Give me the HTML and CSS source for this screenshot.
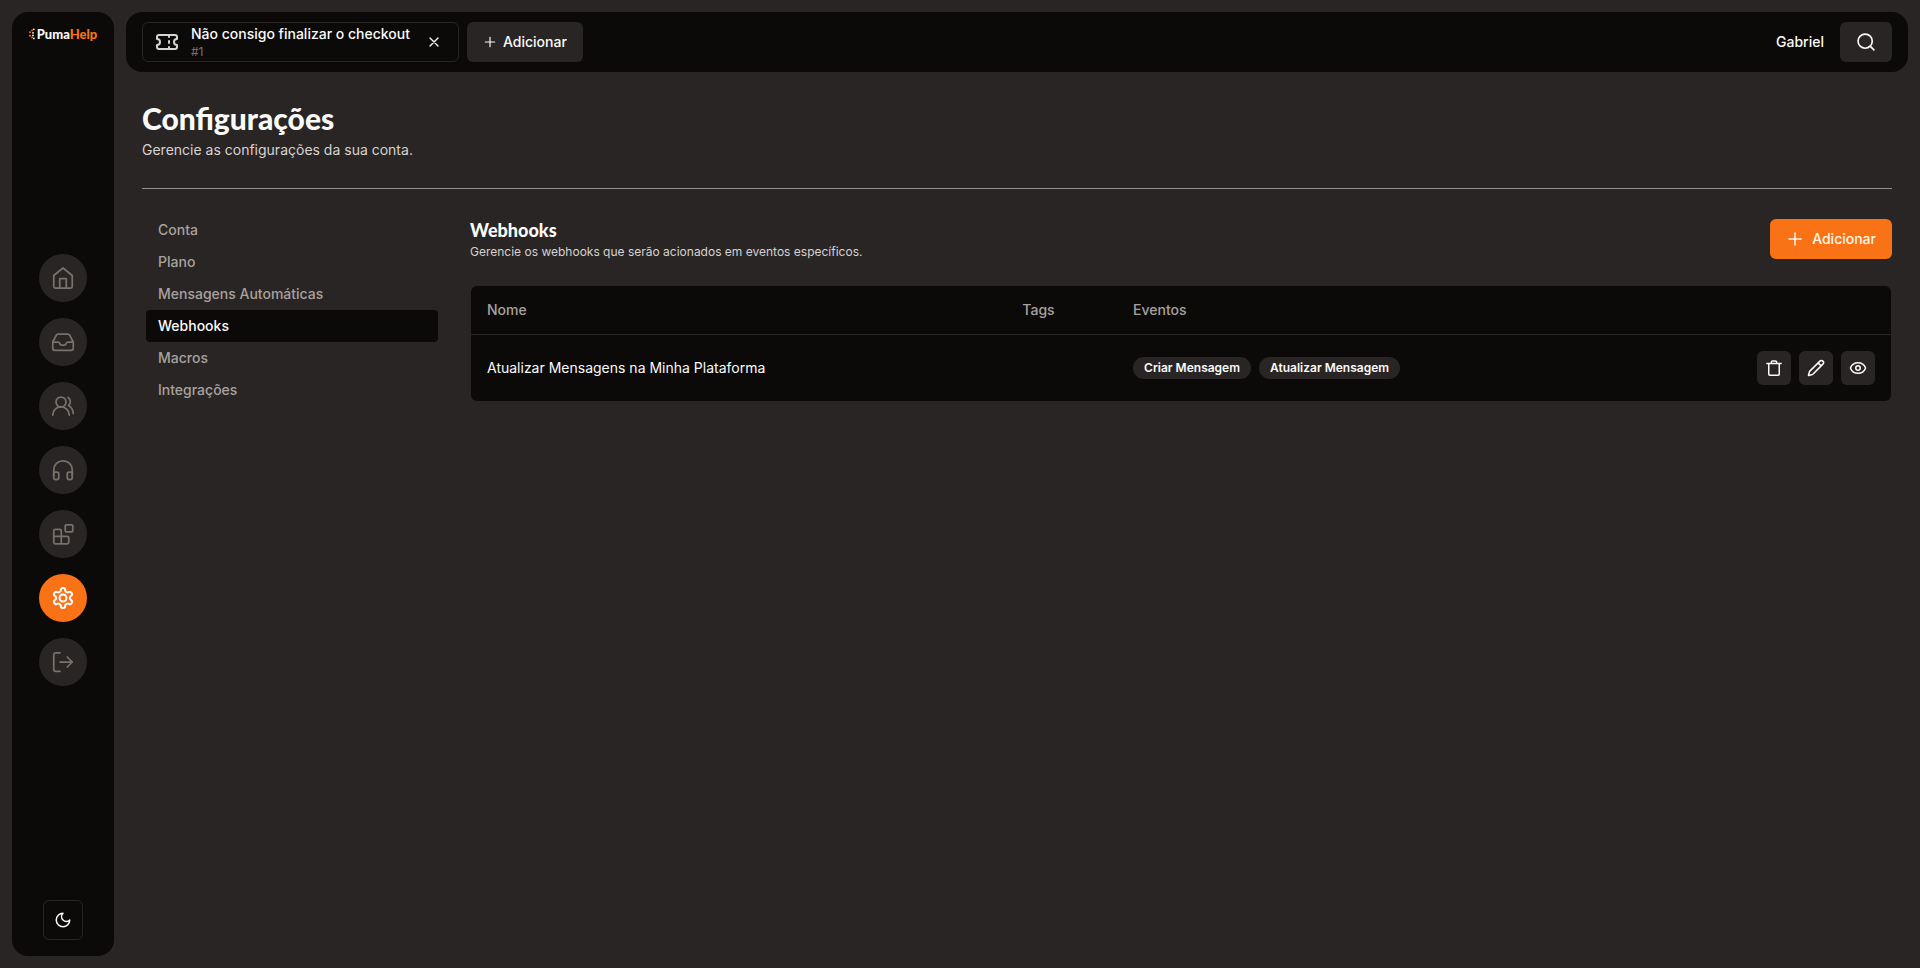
FILE: index.html
```html
<!DOCTYPE html>
<html lang="pt-BR">
<head>
<meta charset="utf-8">
<meta name="viewport" content="width=device-width, initial-scale=1">
<title>PumaHelp - Configurações</title>
<link rel="stylesheet" href="styles.css">
</head>
<body>
<div class="app">
  <aside class="sidebar">
    <a class="logo" href="#">
      <svg class="logo-mark" viewBox="0 0 6 12" aria-hidden="true"><g fill="#f97316"><circle cx="1" cy="4.2" r="1"/><circle cx="1" cy="7.8" r="1"/><circle cx="3" cy="2.4" r=".9"/><circle cx="3" cy="9.4" r=".9"/></g><g fill="#fff"><circle cx="4.8" cy="1.3" r=".9"/><circle cx="4" cy="4.8" r=".9"/><circle cx="4" cy="7.4" r=".9"/><circle cx="4.8" cy="10.4" r=".9"/></g></svg>
      <span>Puma<span class="logo-accent">Help</span></span>
    </a>
    <nav class="rail" aria-label="Principal">
      <a class="rail-link" href="#" aria-label="Início"><svg class="icon icon-lg" viewBox="0 0 24 24"><path d="M2.750 9.500 12 2l9.250 7.500V20.500a1.500 1.500 0 0 1-1.500 1.500H4.250a1.500 1.500 0 0 1-1.500-1.500Z"/><path d="M8.750 22v-9.500h6.500V22"/></svg></a>
      <a class="rail-link" href="#" aria-label="Caixa de entrada"><svg class="icon icon-lg" viewBox="0 0 24 24"><path d="M1.750 12h5.500c1 0 1.200.6 1.500 1.400.3 1 .9 1.600 1.900 1.600h2.700c1 0 1.600-.6 1.900-1.600.3-.8.500-1.400 1.500-1.400h5.500"/><path d="M1.750 12v6.250a2 2 0 0 0 2 2h16.500a2 2 0 0 0 2-2V12l-3.600-6.800a2 2 0 0 0-1.800-1.100H7.150a2 2 0 0 0-1.800 1.100Z"/></svg></a>
      <a class="rail-link" href="#" aria-label="Clientes"><svg class="icon icon-lg" viewBox="0 0 24 24"><circle cx="10" cy="8" r="5"/><path d="M1.750 21a8.250 8.250 0 0 1 16.500 0"/><path d="M17 3.500c2.800 1.600 3.100 5.800.5 8 2.900 1.500 4.500 4.300 4.750 8"/></svg></a>
      <a class="rail-link" href="#" aria-label="Atendimento"><svg class="icon icon-lg" viewBox="0 0 24 24"><path d="M2.750 17.500V12a9.250 9.250 0 0 1 18.500 0v5.500"/><path d="M2.750 14h3a2 2 0 0 1 2 2v3.500a2 2 0 0 1-2 2h-1a2 2 0 0 1-2-2ZM21.250 14h-3a2 2 0 0 0-2 2v3.500a2 2 0 0 0 2 2h1a2 2 0 0 0 2-2Z"/></svg></a>
      <a class="rail-link" href="#" aria-label="Aplicativos"><svg class="icon icon-lg" viewBox="0 0 24 24"><rect x="14.250" y="2.750" width="7.500" height="7" rx="1"/><path d="M10.250 21.750v-13a1.500 1.500 0 0 0-1.500-1.500h-4.500a1.500 1.500 0 0 0-1.500 1.500v11.500a1.500 1.500 0 0 0 1.500 1.500h12a1.500 1.500 0 0 0 1.500-1.500v-4.500a1.500 1.500 0 0 0-1.500-1.500H2.750"/></svg></a>
      <a class="rail-link rail-link-active" href="#" aria-label="Configurações" aria-current="page"><svg class="icon icon-lg" viewBox="0 0 24 24"><path d="M12.220 2h-.44a2 2 0 0 0-2 2v.18a2 2 0 0 1-1 1.730l-.43.250a2 2 0 0 1-2 0l-.15-.08a2 2 0 0 0-2.730.73l-.22.38a2 2 0 0 0 .73 2.730l.15.100a2 2 0 0 1 1 1.720v.51a2 2 0 0 1-1 1.740l-.15.090a2 2 0 0 0-.73 2.730l.22.380a2 2 0 0 0 2.730.73l.15-.08a2 2 0 0 1 2 0l.43.250a2 2 0 0 1 1 1.730V20a2 2 0 0 0 2 2h.44a2 2 0 0 0 2-2v-.18a2 2 0 0 1 1-1.730l.43-.25a2 2 0 0 1 2 0l.15.080a2 2 0 0 0 2.730-.73l.22-.39a2 2 0 0 0-.73-2.730l-.15-.08a2 2 0 0 1-1-1.740v-.5a2 2 0 0 1 1-1.740l.15-.09a2 2 0 0 0 .73-2.730l-.22-.38a2 2 0 0 0-2.730-.73l-.15.080a2 2 0 0 1-2 0l-.43-.25a2 2 0 0 1-1-1.730V4a2 2 0 0 0-2-2z"/><circle cx="12" cy="12" r="3.500"/></svg></a>
      <a class="rail-link" href="#" aria-label="Sair"><svg class="icon icon-lg" viewBox="0 0 24 24"><path d="M9 2.750H4.750a2 2 0 0 0-2 2v14.500a2 2 0 0 0 2 2H9M9 12h12.250M16.250 7l5 5-5 5"/></svg></a>
    </nav>
    <button class="theme-button" type="button" aria-label="Alternar tema"><svg class="icon icon-md" viewBox="0 0 24 24"><path d="M12 3a6 6 0 0 0 9 9 9 9 0 1 1-9-9Z"/></svg></button>
  </aside>

  <div class="content">
    <header class="topbar">
      <div class="tab">
        <svg class="icon icon-lg tab-icon" viewBox="0 0 24 24"><path d="M2 9a3 3 0 0 1 0 6v2a2 2 0 0 0 2 2h16a2 2 0 0 0 2-2v-2a3 3 0 0 1 0-6V7a2 2 0 0 0-2-2H4a2 2 0 0 0-2 2Z"/><path d="M14 5v2M14 11v2M14 17v2"/></svg>
        <div class="tab-text"><span class="tab-title">Não consigo finalizar o checkout</span><span class="tab-id">#1</span></div>
        <button class="tab-close" type="button" aria-label="Fechar"><svg class="icon icon-sm" viewBox="0 0 24 24"><path d="M18 6 6 18M6 6l12 12"/></svg></button>
      </div>
      <button class="button button-dark" type="button"><svg class="icon icon-xs" viewBox="0 0 24 24"><path d="M4 12h16M12 4v16"/></svg>Adicionar</button>
      <span class="user">Gabriel</span>
      <button class="button button-search" type="button" aria-label="Buscar"><svg class="icon icon-md" viewBox="0 0 24 24"><circle cx="11" cy="11" r="8.500"/><path d="m21.500 21.500-4.500-4.500"/></svg></button>
    </header>

    <main class="page">
      <div class="page-head">
        <h1 class="page-title">Configurações</h1>
        <p class="page-subtitle">Gerencie as configurações da sua conta.</p>
      </div>
      <div class="settings">
        <nav class="menu" aria-label="Configurações">
          <a class="menu-link" href="#">Conta</a>
          <a class="menu-link" href="#">Plano</a>
          <a class="menu-link" href="#">Mensagens Automáticas</a>
          <a class="menu-link menu-link-active" href="#" aria-current="page">Webhooks</a>
          <a class="menu-link" href="#">Macros</a>
          <a class="menu-link" href="#">Integrações</a>
        </nav>
        <section class="panel">
          <div class="panel-head">
            <div>
              <h2 class="panel-title">Webhooks</h2>
              <p class="panel-subtitle">Gerencie os webhooks que serão acionados em eventos específicos.</p>
            </div>
            <button class="button button-primary" type="button"><svg class="icon icon-plus" viewBox="0 0 24 24"><path d="M4 12h16M12 4v16"/></svg>Adicionar</button>
          </div>
          <table class="table">
            <thead>
              <tr><th class="col-name" scope="col">Nome</th><th class="col-tags" scope="col">Tags</th><th scope="col">Eventos</th><td></td></tr>
            </thead>
            <tbody>
              <tr>
                <td>Atualizar Mensagens na Minha Plataforma</td>
                <td></td>
                <td><div class="badges"><span class="badge">Criar Mensagem</span><span class="badge">Atualizar Mensagem</span></div></td>
                <td><div class="actions">
                  <button class="action" type="button" aria-label="Excluir"><svg class="icon icon-md" viewBox="0 0 24 24"><path d="M2.500 6h19M5 6v14a1.500 1.500 0 0 0 1.500 1.500h11A1.500 1.500 0 0 0 19 20V6M8.500 6V4A1.500 1.500 0 0 1 10 2.500h4A1.500 1.500 0 0 1 15.500 4v2"/></svg></button>
                  <button class="action" type="button" aria-label="Editar"><svg class="icon icon-md" viewBox="0 0 24 24"><path d="M21.200 6.800a2.800 2.800 0 0 0-4-4L3.800 16.200a2 2 0 0 0-.5.800L2 21.400a.5.500 0 0 0 .6.600L7 20.700a2 2 0 0 0 .8-.5ZM14.800 5.200l4 4"/></svg></button>
                  <button class="action" type="button" aria-label="Visualizar"><svg class="icon icon-md" viewBox="0 0 24 24"><path d="M2 12.300a1 1 0 0 1 0-.6 10.800 10.800 0 0 1 20 0 1 1 0 0 1 0 .6 10.800 10.800 0 0 1-20 0"/><circle cx="12" cy="12" r="3"/></svg></button>
                </div></td>
              </tr>
            </tbody>
          </table>
        </section>
      </div>
    </main>
  </div>
</div>
</body>
</html>
```
FILE: styles.css
```css
* { box-sizing: border-box; }

body {
  margin: 0;
  background: #292524;
  color: #fafaf9;
  font-family: Inter, "Liberation Sans", sans-serif;
  font-size: 14px;
  line-height: 20px;
}

h1, h2, p { margin: 0; }
a { color: inherit; text-decoration: none; }
button { padding: 0; border: 0; background: none; color: inherit; font: inherit; cursor: pointer; }

.icon { flex: none; fill: none; stroke: currentColor; stroke-width: 2; stroke-linecap: round; stroke-linejoin: round; }
.icon-xs { width: 14px; height: 14px; }
.icon-sm { width: 16px; height: 16px; }
.icon-md { width: 20px; height: 20px; }
.icon-plus { width: 18px; height: 18px; }
.icon-lg { width: 24px; height: 24px; }

.app { display: flex; gap: 12px; min-height: 100vh; padding: 12px; }

.sidebar {
  display: flex;
  flex: none;
  flex-direction: column;
  align-items: center;
  justify-content: space-between;
  width: 102px;
  padding: 16px;
  border-radius: 16px;
  background: #0c0a09;
}

.logo { display: flex; align-items: center; gap: 2px; height: 12px; font-family: Lato, sans-serif; font-size: 13px; font-weight: 900; line-height: 12px; }
.logo-mark { width: 6px; height: 12px; }
.logo-accent { color: #f97316; }

.rail { display: flex; flex-direction: column; gap: 16px; }
.rail-link { display: flex; align-items: center; justify-content: center; width: 48px; height: 48px; border-radius: 50%; background: #292524; color: #78716c; }
.rail-link .icon { stroke-width: 1.75; }
.rail-link-active { background: #f97316; color: #fff; }
.rail-link-active .icon { stroke-width: 2; }

.theme-button { display: flex; align-items: center; justify-content: center; width: 40px; height: 40px; border: 1px solid #292524; border-radius: 6px; }
.theme-button .icon { width: 18px; height: 18px; }

.content { flex: 1; min-width: 0; }

.topbar { display: flex; align-items: center; gap: 8px; height: 60px; padding: 0 16px; border-radius: 16px; background: #0c0a09; }
.tab { display: flex; align-items: center; height: 40px; padding: 0 16px 0 12px; border: 1px solid #292524; border-radius: 6px; }
.tab-icon { color: #d6d3d1; }
.tab-text { display: flex; flex-direction: column; margin: 0 16px 0 12px; }
.tab-title { font-weight: 500; line-height: 20px; }
.tab-id { color: #78716c; font-size: 12px; line-height: 16px; }
.tab-close { display: flex; }

.button { display: flex; flex: none; align-items: center; justify-content: center; gap: 8px; height: 40px; padding: 0 16px; border-radius: 6px; font-weight: 500; }
.button-dark { gap: 6px; background: #292524; }
.button-search { background: #292524; }
.button-primary { background: #f97316; color: #fff7ed; }
.user { margin: 0 8px 0 auto; font-weight: 500; }

.page { padding: 28px 16px 0; }
.page-head { padding-bottom: 28px; border-bottom: 1px solid #918d8a; }
.page-title { padding-bottom: 4px; font-family: Lato, "Liberation Sans", sans-serif; font-size: 30px; font-weight: 900; line-height: 36px; }
.page-subtitle { color: #d6d3d1; line-height: 20px; }

.settings { display: flex; gap: 32px; padding-top: 25px; }
.menu { display: flex; flex: none; flex-direction: column; width: 296px; padding-left: 4px; }
.menu-link { padding: 6px 12px; border-radius: 4px; color: #a8a29e; font-weight: 500; }
.menu-link-active { background: #0c0a09; color: #fafaf9; }

.panel { flex: 1; min-width: 0; padding-top: 4px; }
.panel-head { display: flex; align-items: center; justify-content: space-between; margin-bottom: 26px; }
.panel-title { padding-bottom: 2px; font-family: Lato, "Liberation Sans", sans-serif; font-size: 18px; font-weight: 900; line-height: 24px; }
.panel-subtitle { color: #d6d3d1; font-size: 12px; line-height: 16px; }

.table { width: calc(100% - 2px); margin: 0 1px; border-spacing: 0; border-radius: 6px; background: #0c0a09; }
.table th, .table td { padding: 0 16px; text-align: left; }
.table thead th, .table thead td { height: 49px; border-bottom: 1px solid #292524; color: #a8a29e; font-weight: 500; }
.table tbody td { padding: 16px; }
.col-name { width: 37.7%; }
.col-tags { width: 7.8%; }
.badges { display: flex; gap: 8px; }
.badge { padding: 3px 11px; border-radius: 11px; background: #292524; font-size: 12px; font-weight: 600; line-height: 16px; }
.actions { display: flex; justify-content: flex-end; gap: 8px; }
.action { display: flex; align-items: center; justify-content: center; width: 34px; height: 34px; border-radius: 6px; background: #292524; }
.action .icon { width: 18px; height: 18px; }
```
